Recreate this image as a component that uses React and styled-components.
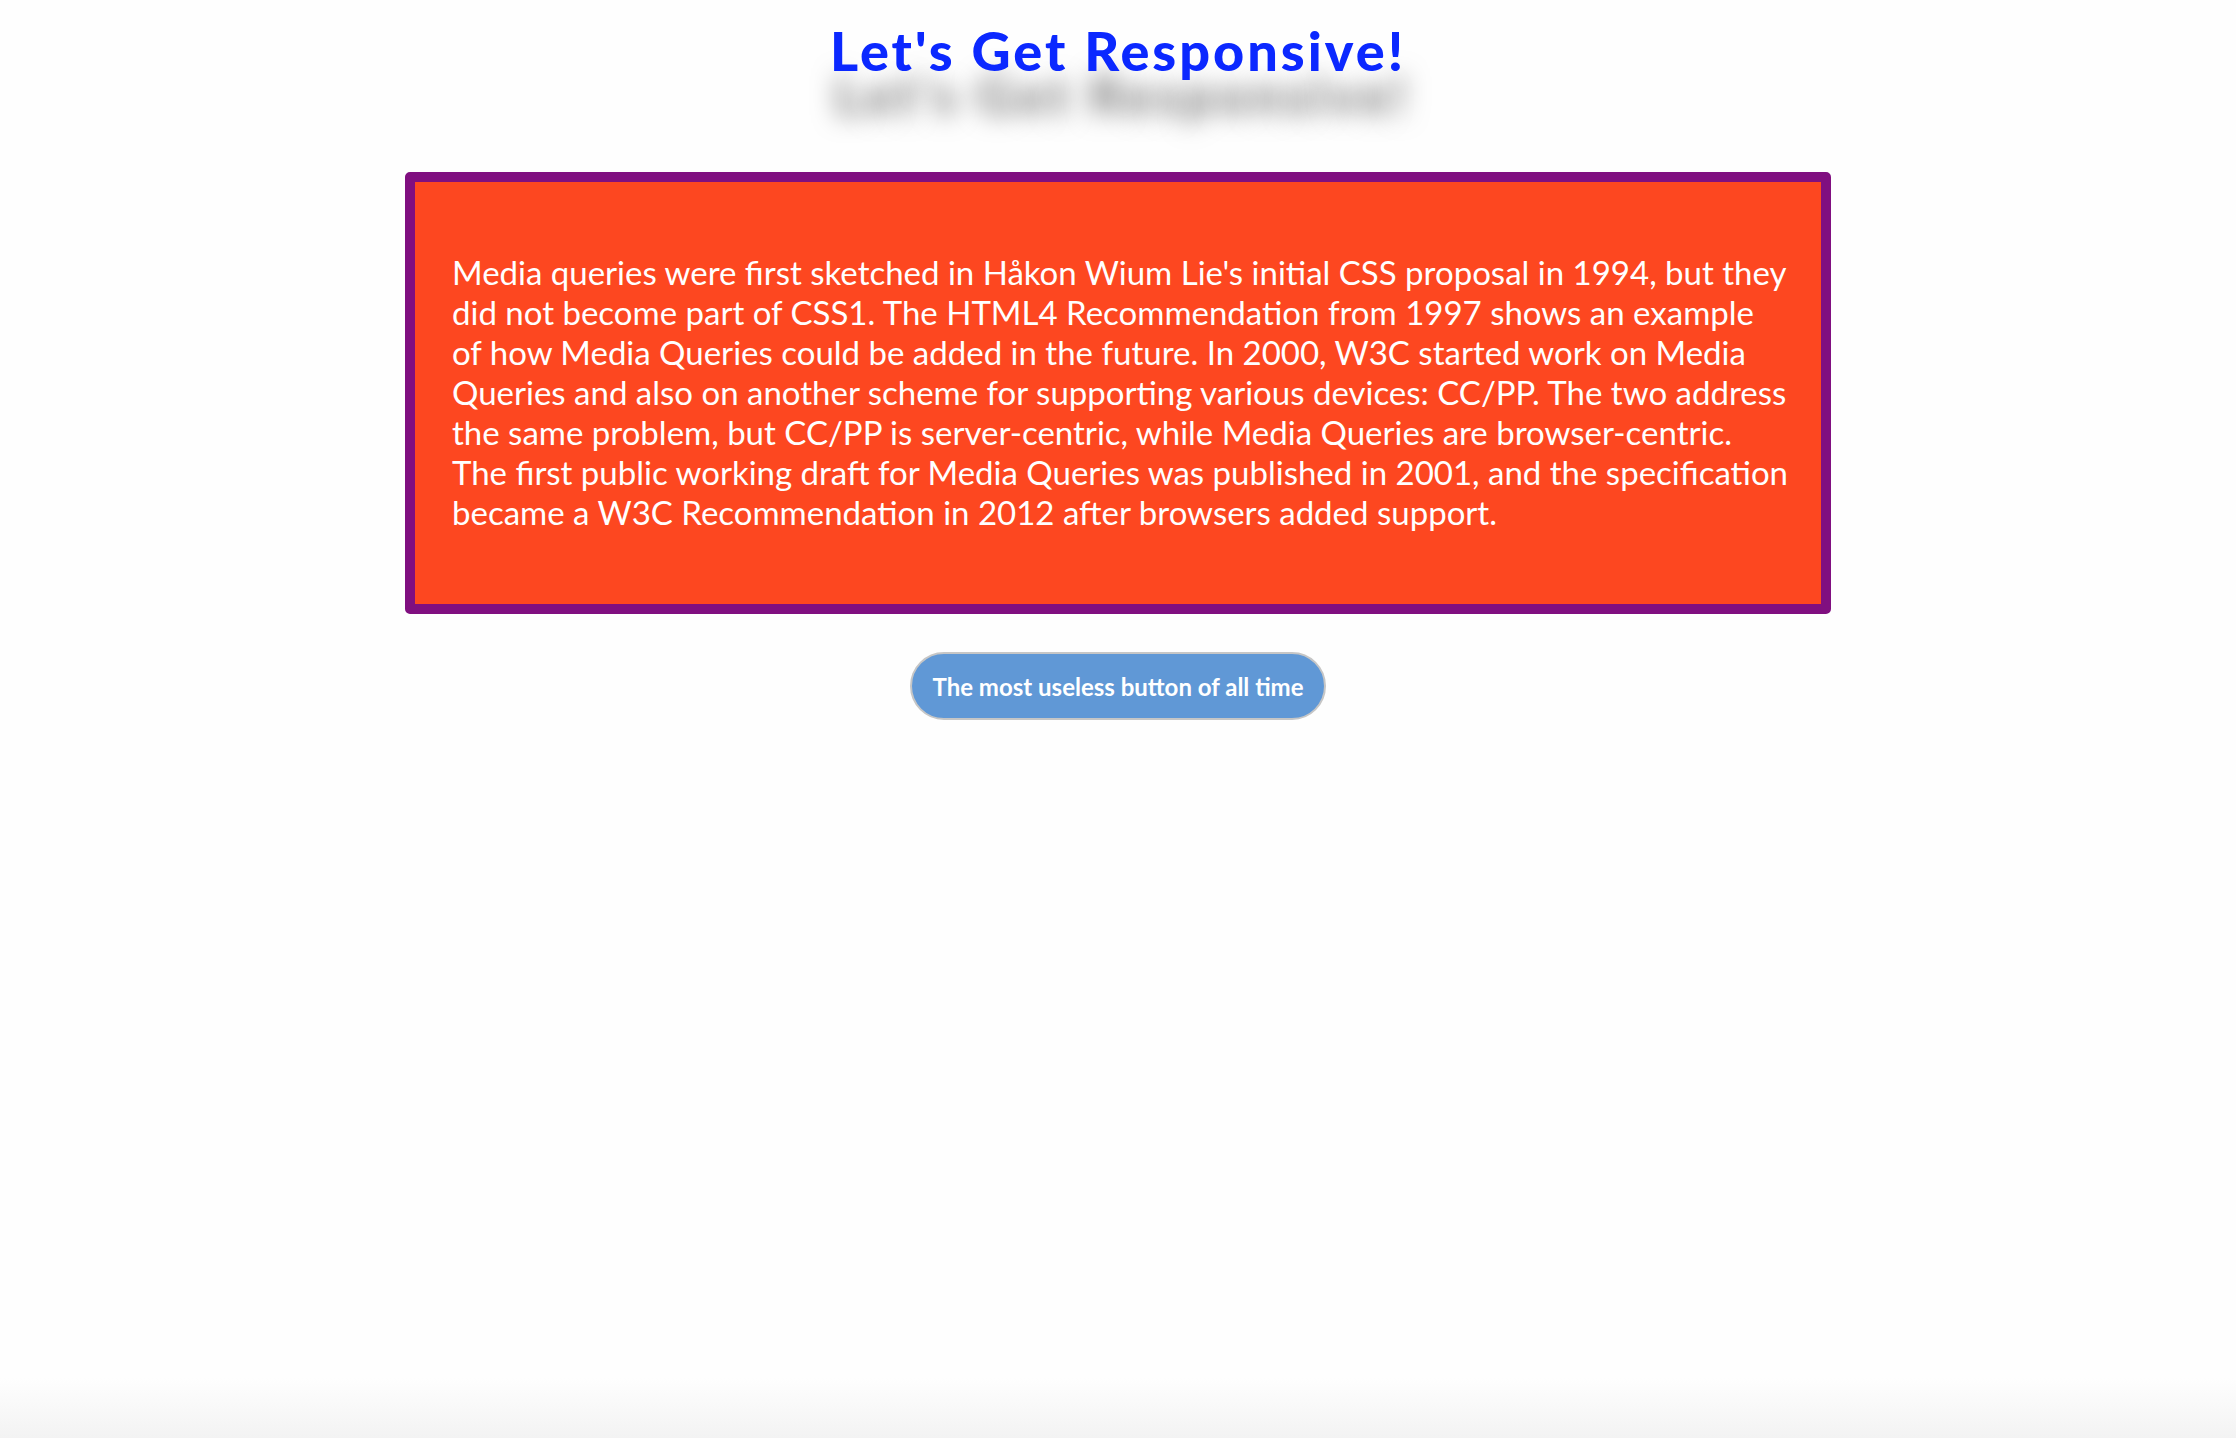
import React from 'react';
import styled, { createGlobalStyle } from 'styled-components';

const GlobalStyle = createGlobalStyle`
    html, body {
        margin: 0;
        padding: 0;
    }
    body {
        font-family: Lato, "Open Sans", sans-serif;
        background-color: #fefefe;
    }
`

const Page = styled.div`
    min-height: 100vh;
    box-sizing: border-box;
    display: flex;
    flex-direction: column;
    align-items: center;
    background: linear-gradient(to bottom, #fefefe calc(100% - 60px), #f3f3f3 100%);
`

const Title = styled.h1`
    margin: 20px 0 0 0;
    color: #0b28ff;
    font-family: Lato, sans-serif;
    font-weight: 900;
    font-size: 54px;
    letter-spacing: 3px;
    line-height: 62px;
    text-shadow: 4px 44px 24px rgba(0, 0, 0, 0.5);
`

const Card = styled.div`
    width: 1426px;
    box-sizing: border-box;
    margin-top: 90px;
    padding: 70px 35px 72px 37px;
    background-color: #fd4720;
    border: 10px solid #800f80;
    border-radius: 5px;
`

const Text = styled.p`
    margin: 0;
    color: white;
    font-family: Lato, sans-serif;
    font-size: 33px;
    line-height: 40px;
    white-space: nowrap;
`

const Line = styled.span`
    display: block;
`

const Button = styled.button`
    margin-top: 38px;
    height: 68px;
    padding: 0 20px;
    border: 2px solid #c6c6c6;
    border-radius: 34px;
    background-color: #6098d6;
    color: white;
    font-family: Lato, sans-serif;
    font-weight: 700;
    font-size: 24px;
    cursor: pointer;
`

const lines = [
    "Media queries were first sketched in Håkon Wium Lie's initial CSS proposal in 1994, but they",
    "did not become part of CSS1. The HTML4 Recommendation from 1997 shows an example",
    "of how Media Queries could be added in the future. In 2000, W3C started work on Media",
    "Queries and also on another scheme for supporting various devices: CC/PP. The two address",
    "the same problem, but CC/PP is server-centric, while Media Queries are browser-centric.",
    "The first public working draft for Media Queries was published in 2001, and the specification",
    "became a W3C Recommendation in 2012 after browsers added support.",
]

export default function App() {
    return (
        <Page>
            <GlobalStyle />
            <Title>Let's Get Responsive!</Title>
            <Card>
                <Text>
                    {lines.map((l, i) => <Line key={i}>{l}</Line>)}
                </Text>
            </Card>
            <Button>The most useless button of all time</Button>
        </Page>
    )
}
